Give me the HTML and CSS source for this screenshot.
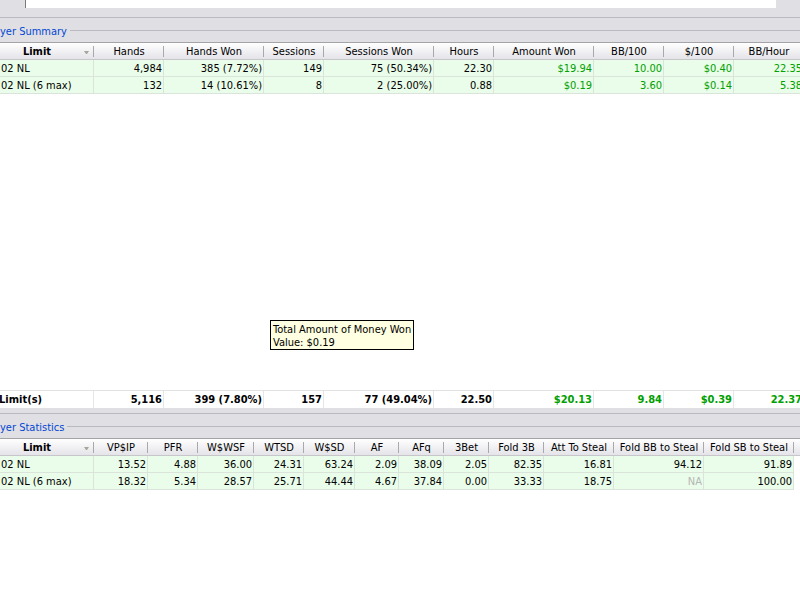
FILE: index.html
```html
<!DOCTYPE html>
<html>
<head>
<meta charset="utf-8">
<title>Player Summary</title>
<link rel="stylesheet" href="styles.css">
</head>
<body>
<div class="topbar"><div class="topbox"></div></div>

<div class="sechead first">
  <div class="rule"></div>
  <div class="legend"><span class="legend-text">yer Summary</span><span class="legend-line"></span></div>
</div>

<div class="grid t1">
  <div class="row head">
    <div class="hc lim"><span class="lim-label">Limit</span><span class="sort"></span></div>
    <div class="hc">Hands</div>
    <div class="hc">Hands Won</div>
    <div class="hc">Sessions</div>
    <div class="hc">Sessions Won</div>
    <div class="hc">Hours</div>
    <div class="hc">Amount Won</div>
    <div class="hc">BB/100</div>
    <div class="hc">$/100</div>
    <div class="hc">BB/Hour</div>
  </div>
  <div class="row data">
    <div class="c l">02 NL</div>
    <div class="c">4,984</div>
    <div class="c">385 (7.72%)</div>
    <div class="c">149</div>
    <div class="c">75 (50.34%)</div>
    <div class="c">22.30</div>
    <div class="c g">$19.94</div>
    <div class="c g">10.00</div>
    <div class="c g">$0.40</div>
    <div class="c g">22.35</div>
  </div>
  <div class="row data">
    <div class="c l">02 NL (6 max)</div>
    <div class="c">132</div>
    <div class="c">14 (10.61%)</div>
    <div class="c">8</div>
    <div class="c">2 (25.00%)</div>
    <div class="c">0.88</div>
    <div class="c g">$0.19</div>
    <div class="c g">3.60</div>
    <div class="c g">$0.14</div>
    <div class="c g">5.38</div>
  </div>
  <div class="blank"></div>
  <div class="row total">
    <div class="c l first-l">Limit(s)</div>
    <div class="c">5,116</div>
    <div class="c">399 (7.80%)</div>
    <div class="c">157</div>
    <div class="c">77 (49.04%)</div>
    <div class="c">22.50</div>
    <div class="c g">$20.13</div>
    <div class="c g">9.84</div>
    <div class="c g">$0.39</div>
    <div class="c g">22.37</div>
  </div>
</div>

<div class="sechead second">
  <div class="rule"></div>
  <div class="legend"><span class="legend-text">yer Statistics</span><span class="legend-line"></span></div>
</div>

<div class="grid t2">
  <div class="row head">
    <div class="hc lim"><span class="lim-label">Limit</span><span class="sort"></span></div>
    <div class="hc">VP$IP</div>
    <div class="hc">PFR</div>
    <div class="hc">W$WSF</div>
    <div class="hc">WTSD</div>
    <div class="hc">W$SD</div>
    <div class="hc">AF</div>
    <div class="hc">AFq</div>
    <div class="hc">3Bet</div>
    <div class="hc">Fold 3B</div>
    <div class="hc">Att To Steal</div>
    <div class="hc">Fold BB to Steal</div>
    <div class="hc">Fold SB to Steal</div>
    <div class="hc filler"></div>
  </div>
  <div class="row data">
    <div class="c l">02 NL</div>
    <div class="c">13.52</div>
    <div class="c">4.88</div>
    <div class="c">36.00</div>
    <div class="c">24.31</div>
    <div class="c">63.24</div>
    <div class="c">2.09</div>
    <div class="c">38.09</div>
    <div class="c">2.05</div>
    <div class="c">82.35</div>
    <div class="c">16.81</div>
    <div class="c">94.12</div>
    <div class="c">91.89</div>
    <div class="c fill"></div>
  </div>
  <div class="row data">
    <div class="c l">02 NL (6 max)</div>
    <div class="c">18.32</div>
    <div class="c">5.34</div>
    <div class="c">28.57</div>
    <div class="c">25.71</div>
    <div class="c">44.44</div>
    <div class="c">4.67</div>
    <div class="c">37.84</div>
    <div class="c">0.00</div>
    <div class="c">33.33</div>
    <div class="c">18.75</div>
    <div class="c na">NA</div>
    <div class="c">100.00</div>
    <div class="c fill"></div>
  </div>
</div>

<div class="tip">Total Amount of Money Won<br>Value: $0.19</div>
</body>
</html>
```

FILE: styles.css
```css
html, body {
  margin: 0;
  padding: 0;
  width: 800px;
  height: 600px;
  overflow: hidden;
  background: #ffffff;
}

body {
  position: relative;
  font-family: "DejaVu Sans Condensed", "DejaVu Sans", sans-serif;
  font-stretch: condensed;
  font-size: 11px;
  color: #000000;
}

.topbar {
  height: 8px;
  background: #e0dfe3;
}

.topbox {
  margin-left: 25px;
  width: 751px;
  height: 8px;
  box-sizing: border-box;
  border-left: 1px solid #7a7a7a;
  background: #ffffff;
}

.sechead {
  background: #e0dfe3;
  padding-top: 9px;
}

.sechead.second {
  padding-top: 5px;
}

.rule {
  height: 1px;
  background: #b9b9c1;
}

.legend {
  height: 24px;
  display: flex;
  align-items: flex-start;
}

.legend-text {
  color: #0047d5;
  line-height: 13px;
  margin-top: 7px;
  white-space: nowrap;
}

.legend-line {
  flex: 1;
  height: 1px;
  margin: 12px 0 0 3px;
  background: #b9b9c1;
}

.grid {
  border-top: 1px solid #a3a3a8;
  background: #ffffff;
}

.row {
  display: grid;
}

.t1 .row {
  grid-template-columns: 94px 70px 100px 60px 110px 60px 100px 70px 70px 70px;
}

.t2 .row {
  grid-template-columns: 94px 54px 50px 56px 50px 51px 44px 45px 45px 55px 70px 90px 90px 1fr;
}

.head {
  height: 17px;
  box-sizing: border-box;
  border-bottom: 1px solid #c6c6cb;
}

.hc {
  box-sizing: border-box;
  padding-top: 1px;
  background:
    linear-gradient(#a8a8ad, #a8a8ad) right center / 1px 11px no-repeat,
    linear-gradient(#ffffff, #e4e4e9);
  text-align: center;
  line-height: 15px;
  white-space: nowrap;
  overflow: hidden;
}

.hc.filler {
  background: linear-gradient(#ffffff, #e4e4e9);
}

.hc.lim {
  display: flex;
  align-items: center;
  font-weight: bold;
}

.lim-label {
  width: 74px;
  text-align: center;
}

.sort {
  width: 1px;
  height: 0;
  margin: 2px 0 0 10px;
  border-left: 2px solid transparent;
  border-right: 2px solid transparent;
  border-top: 3px solid #a9a59c;
}

.c {
  height: 17px;
  box-sizing: border-box;
  padding-top: 1px;
  border-right: 1px solid #dbe4db;
  border-bottom: 1px solid #dbe4db;
  background: #eafdea;
  line-height: 15px;
  text-align: right;
  padding-right: 1px;
  white-space: nowrap;
  overflow: hidden;
}

.c.l {
  text-align: left;
  padding-left: 1px;
}

.g {
  color: #00a000;
}

.na {
  color: #b5b5b5;
}

.c.fill {
  background: #ffffff;
  border: none;
}

.blank {
  height: 296px;
  background: #ffffff;
}

.total {
  height: 18px;
  box-sizing: border-box;
  border-top: 1px solid #e2e2e2;
  font-weight: bold;
  background: #ffffff;
}

.total .c {
  background: #ffffff;
  border-bottom: none;
  border-right-color: #e6e6e6;
  height: 17px;
}

.total .c.first-l {
  padding-left: 0;
  text-indent: -1px;
}

.tip {
  position: absolute;
  left: 270px;
  top: 320px;
  border: 1px solid #000000;
  background: #ffffe1;
  padding: 2px 2px 0;
  line-height: 13px;
  white-space: nowrap;
}
```
